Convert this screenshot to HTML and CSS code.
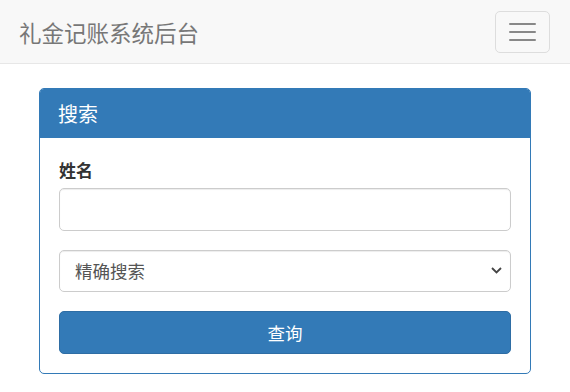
FILE: index.html
```html
<html>
    <head>
        <meta charset="utf-8">
        <link rel="stylesheet" href="styles.css">
        <meta name="viewport" content="width=device-width, initial-scale=1.0">
        <title>礼金记账系统后台</title>
    </head>
    <body>
        <nav class="navbar">
            <span class="brand">礼金记账系统后台</span>
            <button class="toggle" type="button">
                <span class="bar"></span>
                <span class="bar"></span>
                <span class="bar"></span>
            </button>
        </nav>
        <div class="container">
            <div class="panel">
                <div class="panel-heading">搜索</div>
                <div class="panel-body">
                    <div class="form-group">
                        <label class="label">姓名</label>
                        <input class="form-control" type="text">
                    </div>
                    <div class="form-group">
                        <div class="select">
                            <span>精确搜索</span>
                            <svg class="chevron" width="11" height="7" viewBox="0 0 11 7"><path d="M1 1 L5.5 5.5 L10 1" fill="none" stroke="#444" stroke-width="1.8"/></svg>
                        </div>
                    </div>
                    <button class="btn" type="button">查询</button>
                </div>
            </div>
        </div>
    </body>
</html>
```
FILE: styles.css
```css
html {padding: 0;}
body {font-family: "Noto Sans CJK SC", "Liberation Sans", sans-serif; font-size: 17.5px; margin: 0; padding: 0; color: #333; background: #fff;}

.navbar {
    height: 63px;
    background: #f8f8f8;
    border-bottom: 1.5px solid #e7e7e7;
    display: flex;
    align-items: center;
    justify-content: space-between;
    padding: 0 20px 0 19px;
    margin-bottom: 24px;
}
.brand {font-size: 22.5px; color: #777; line-height: 28px;}

.toggle {
    width: 55px; height: 42px;
    border: 1.25px solid #ddd; border-radius: 5px;
    background: transparent;
    display: flex; flex-direction: column; align-items: center; justify-content: center;
    gap: 5.5px; padding: 0; margin-top: 1px;
}
.toggle .bar {display: block; width: 27.5px; height: 2.5px; background: #888; border-radius: 1px;}

.container {padding: 0 39px;}

.panel {border: 1.25px solid #337ab7; border-radius: 5px; overflow: hidden;}
.panel-heading {
    background: #337ab7; color: #fff;
    font-size: 20px; line-height: 25px;
    padding: 12px 19px 12px 18px;
}
.panel-body {padding: 19px 19px 19px 19px;}

.form-group {margin-bottom: 19px;}
.label {display: block; font-weight: bold; font-size: 17px; line-height: 25px; margin-bottom: 6px; color: #333;}

.form-control, .select {
    box-sizing: border-box; display: block; width: 100%; height: 42.5px;
    border: 1.25px solid #ccc; border-radius: 5px; background: #fff;
    box-shadow: inset 0 1px 1px rgba(0,0,0,.075);
    font-family: inherit; font-size: 17.5px; padding: 0 15px; margin: 0;
}
.select {display: flex; align-items: center; justify-content: space-between; color: #555; padding: 0 7px 0 15px;}
.chevron {margin-right: 1px;}

.btn {
    display: block; width: 100%; height: 42.5px;
    background: #337ab7; color: #fff; border: 1.25px solid #2e6da4; border-radius: 5px;
    font-family: inherit; font-size: 17.5px; padding: 0;
}
```
